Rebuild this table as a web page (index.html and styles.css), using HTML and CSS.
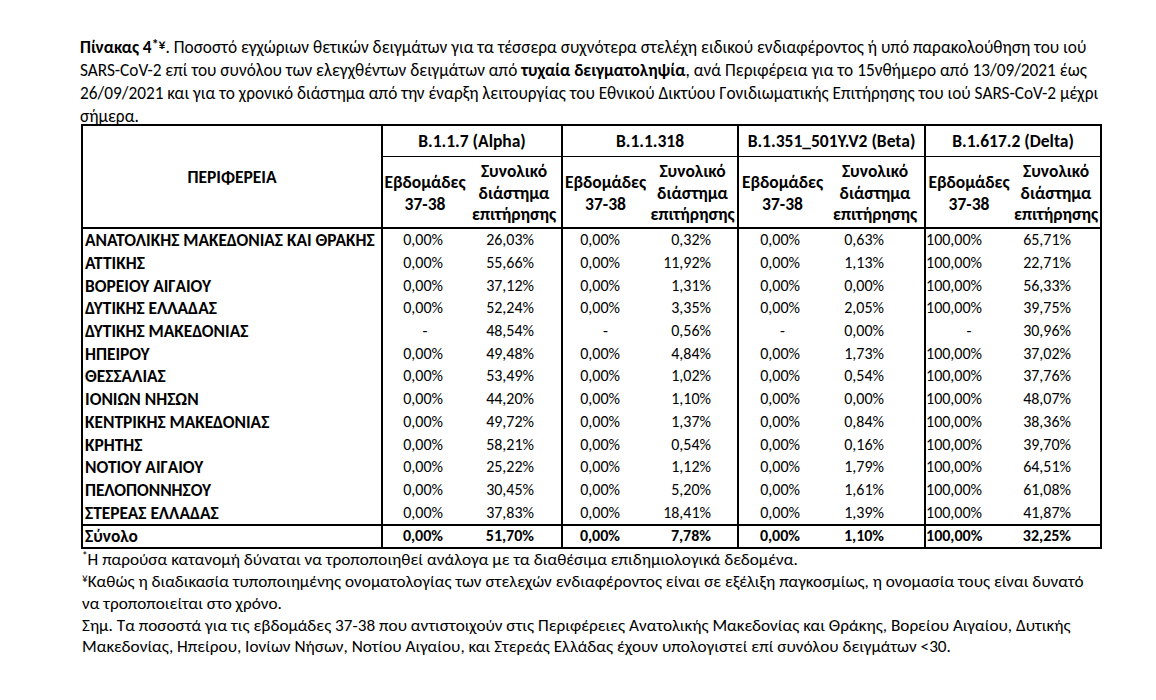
FILE: index.html
```html
<!DOCTYPE html>
<html lang="el">
<head>
<meta charset="utf-8">
<title>Πίνακας 4</title>
<link rel="stylesheet" href="styles.css">
</head>
<body>
<div class="page">
  <p class="title"><b>Πίνακας 4<sup class="tsup">*¥</sup></b>. Ποσοστό εγχώριων θετικών δειγμάτων για τα τέσσερα συχνότερα στελέχη ειδικού ενδιαφέροντος ή υπό παρακολούθηση του ιού<br>SARS-CoV-2 επί του συνόλου των ελεγχθέντων δειγμάτων από <b>τυχαία δειγματοληψία</b>, ανά Περιφέρεια για το 15νθήμερο από 13/09/2021 έως<br>26/09/2021 και για το χρονικό διάστημα από την έναρξη λειτουργίας του Εθνικού Δικτύου Γονιδιωματικής Επιτήρησης του ιού SARS-CoV-2 μέχρι<br>σήμερα.</p>

  <table class="data">
    <colgroup>
      <col class="w-reg">
      <col class="w-a1"><col class="w-a2">
      <col class="w-b1"><col class="w-b2">
      <col class="w-c1"><col class="w-c2">
      <col class="w-d1"><col class="w-d2">
    </colgroup>
    <thead>
      <tr class="h1">
        <th rowspan="2" class="reg-h">ΠΕΡΙΦΕΡΕΙΑ</th>
        <th colspan="2" class="grp">B.1.1.7 (Alpha)</th>
        <th colspan="2" class="grp">B.1.1.318</th>
        <th colspan="2" class="grp">B.1.351_501Y.V2 (Beta)</th>
        <th colspan="2" class="grp">B.1.617.2 (Delta)</th>
      </tr>
      <tr class="h2">
        <th class="sub gl">Εβδομάδες<br>37-38</th><th class="sub">Συνολικό<br>διάστημα<br>επιτήρησης</th>
        <th class="sub gl">Εβδομάδες<br>37-38</th><th class="sub">Συνολικό<br>διάστημα<br>επιτήρησης</th>
        <th class="sub gl">Εβδομάδες<br>37-38</th><th class="sub">Συνολικό<br>διάστημα<br>επιτήρησης</th>
        <th class="sub gl">Εβδομάδες<br>37-38</th><th class="sub">Συνολικό<br>διάστημα<br>επιτήρησης</th>
      </tr>
    </thead>
    <tbody>
      <tr><td class="reg">ΑΝΑΤΟΛΙΚΗΣ ΜΑΚΕΔΟΝΙΑΣ ΚΑΙ ΘΡΑΚΗΣ</td><td class="n a1 gl">0,00%</td><td class="n a2">26,03%</td><td class="n b1 gl">0,00%</td><td class="n b2">0,32%</td><td class="n c1 gl">0,00%</td><td class="n c2">0,63%</td><td class="n d1 gl">100,00%</td><td class="n d2">65,71%</td></tr>
      <tr><td class="reg">ΑΤΤΙΚΗΣ</td><td class="n a1 gl">0,00%</td><td class="n a2">55,66%</td><td class="n b1 gl">0,00%</td><td class="n b2">11,92%</td><td class="n c1 gl">0,00%</td><td class="n c2">1,13%</td><td class="n d1 gl">100,00%</td><td class="n d2">22,71%</td></tr>
      <tr><td class="reg">ΒΟΡΕΙΟΥ ΑΙΓΑΙΟΥ</td><td class="n a1 gl">0,00%</td><td class="n a2">37,12%</td><td class="n b1 gl">0,00%</td><td class="n b2">1,31%</td><td class="n c1 gl">0,00%</td><td class="n c2">0,00%</td><td class="n d1 gl">100,00%</td><td class="n d2">56,33%</td></tr>
      <tr><td class="reg">ΔΥΤΙΚΗΣ ΕΛΛΑΔΑΣ</td><td class="n a1 gl">0,00%</td><td class="n a2">52,24%</td><td class="n b1 gl">0,00%</td><td class="n b2">3,35%</td><td class="n c1 gl">0,00%</td><td class="n c2">2,05%</td><td class="n d1 gl">100,00%</td><td class="n d2">39,75%</td></tr>
      <tr><td class="reg">ΔΥΤΙΚΗΣ ΜΑΚΕΔΟΝΙΑΣ</td><td class="dash gl">-</td><td class="n a2">48,54%</td><td class="dash gl">-</td><td class="n b2">0,56%</td><td class="dash gl">-</td><td class="n c2">0,00%</td><td class="dash gl">-</td><td class="n d2">30,96%</td></tr>
      <tr><td class="reg">ΗΠΕΙΡΟΥ</td><td class="n a1 gl">0,00%</td><td class="n a2">49,48%</td><td class="n b1 gl">0,00%</td><td class="n b2">4,84%</td><td class="n c1 gl">0,00%</td><td class="n c2">1,73%</td><td class="n d1 gl">100,00%</td><td class="n d2">37,02%</td></tr>
      <tr><td class="reg">ΘΕΣΣΑΛΙΑΣ</td><td class="n a1 gl">0,00%</td><td class="n a2">53,49%</td><td class="n b1 gl">0,00%</td><td class="n b2">1,02%</td><td class="n c1 gl">0,00%</td><td class="n c2">0,54%</td><td class="n d1 gl">100,00%</td><td class="n d2">37,76%</td></tr>
      <tr><td class="reg">ΙΟΝΙΩΝ ΝΗΣΩΝ</td><td class="n a1 gl">0,00%</td><td class="n a2">44,20%</td><td class="n b1 gl">0,00%</td><td class="n b2">1,10%</td><td class="n c1 gl">0,00%</td><td class="n c2">0,00%</td><td class="n d1 gl">100,00%</td><td class="n d2">48,07%</td></tr>
      <tr><td class="reg">ΚΕΝΤΡΙΚΗΣ ΜΑΚΕΔΟΝΙΑΣ</td><td class="n a1 gl">0,00%</td><td class="n a2">49,72%</td><td class="n b1 gl">0,00%</td><td class="n b2">1,37%</td><td class="n c1 gl">0,00%</td><td class="n c2">0,84%</td><td class="n d1 gl">100,00%</td><td class="n d2">38,36%</td></tr>
      <tr><td class="reg">ΚΡΗΤΗΣ</td><td class="n a1 gl">0,00%</td><td class="n a2">58,21%</td><td class="n b1 gl">0,00%</td><td class="n b2">0,54%</td><td class="n c1 gl">0,00%</td><td class="n c2">0,16%</td><td class="n d1 gl">100,00%</td><td class="n d2">39,70%</td></tr>
      <tr><td class="reg">ΝΟΤΙΟΥ ΑΙΓΑΙΟΥ</td><td class="n a1 gl">0,00%</td><td class="n a2">25,22%</td><td class="n b1 gl">0,00%</td><td class="n b2">1,12%</td><td class="n c1 gl">0,00%</td><td class="n c2">1,79%</td><td class="n d1 gl">100,00%</td><td class="n d2">64,51%</td></tr>
      <tr><td class="reg">ΠΕΛΟΠΟΝΝΗΣΟΥ</td><td class="n a1 gl">0,00%</td><td class="n a2">30,45%</td><td class="n b1 gl">0,00%</td><td class="n b2">5,20%</td><td class="n c1 gl">0,00%</td><td class="n c2">1,61%</td><td class="n d1 gl">100,00%</td><td class="n d2">61,08%</td></tr>
      <tr><td class="reg">ΣΤΕΡΕΑΣ ΕΛΛΑΔΑΣ</td><td class="n a1 gl">0,00%</td><td class="n a2">37,83%</td><td class="n b1 gl">0,00%</td><td class="n b2">18,41%</td><td class="n c1 gl">0,00%</td><td class="n c2">1,39%</td><td class="n d1 gl">100,00%</td><td class="n d2">41,87%</td></tr>
    </tbody>
    <tfoot>
      <tr class="total"><td class="reg">Σύνολο</td><td class="n a1 gl">0,00%</td><td class="n a2">51,70%</td><td class="n b1 gl">0,00%</td><td class="n b2">7,78%</td><td class="n c1 gl">0,00%</td><td class="n c2">1,10%</td><td class="n d1 gl">100,00%</td><td class="n d2">32,25%</td></tr>
    </tfoot>
  </table>

  <div class="notes">
    <p><sup>*</sup>Η παρούσα κατανομή δύναται να τροποποιηθεί ανάλογα με τα διαθέσιμα επιδημιολογικά δεδομένα.</p>
    <p><sup>¥</sup>Καθώς η διαδικασία τυποποιημένης ονοματολογίας των στελεχών ενδιαφέροντος είναι σε εξέλιξη παγκοσμίως, η ονομασία τους είναι δυνατό<br>να τροποποιείται στο χρόνο.</p>
    <p>Σημ. Τα ποσοστά για τις εβδομάδες 37-38 που αντιστοιχούν στις Περιφέρειες Ανατολικής Μακεδονίας και Θράκης, Βορείου Αιγαίου, Δυτικής<br>Μακεδονίας, Ηπείρου, Ιονίων Νήσων, Νοτίου Αιγαίου, και Στερεάς Ελλάδας έχουν υπολογιστεί επί συνόλου δειγμάτων &lt;30.</p>
  </div>
</div>
</body>
</html>
```

FILE: styles.css
```css
html, body {
  margin: 0;
  padding: 0;
  background: #ffffff;
}

body {
  font-family: Carlito, "Open Sans", "Noto Sans", sans-serif;
  color: #000000;
  font-size: 17.2px;
}

.page {
  padding: 36px 0 0 80px;
}

.title {
  margin: 0 0 -4px 0;
  font-size: 17.3px;
  line-height: 23px;
  white-space: nowrap;
}

sup {
  font-size: 0.65em;
  line-height: 0;
  vertical-align: 0.45em;
}

.tsup {
  font-size: 0.8em;
  vertical-align: 0.3em;
}

.data {
  margin-left: 1px;
  border-collapse: collapse;
  table-layout: fixed;
  width: 1021px;
  border: 2px solid #000;
}

.w-reg { width: 300px; }
.w-a1 { width: 85px; }
.w-a2 { width: 95px; }
.w-b1 { width: 86px; }
.w-b2 { width: 90px; }
.w-c1 { width: 88px; }
.w-c2 { width: 99px; }
.w-d1 { width: 87px; }
.w-d2 { width: 89px; }

th, td {
  padding: 0;
  white-space: nowrap;
}

th {
  font-weight: bold;
  font-size: 17.5px;
  text-align: center;
}

.h1 th {
  height: 30px;
  line-height: 20px;
  border-bottom: 1.5px solid #000;
}

.h1 .reg-h {
  border-bottom: 2px solid #000;
  border-right: 2px solid #000;
}

.grp {
  border-left: 2px solid #000;
}

.h2 th {
  height: 67px;
  line-height: 21.5px;
  padding-top: 3px;
  border-bottom: 2px solid #000;
}

.gl {
  border-left: 2px solid #000;
}

td {
  height: 22.7px;
  line-height: 20px;
}

.reg {
  font-weight: bold;
  font-size: 17.4px;
  text-align: left;
  padding-left: 2px;
  border-right: 2px solid #000;
}

.n, .dash {
  font-size: 16px;
}

.n {
  text-align: right;
}

.a1 { padding-right: 24px; }
.a2 { padding-right: 27px; }
.b1 { padding-right: 28px; }
.b2 { padding-right: 26px; }
.c1 { padding-right: 26px; }
.c2 { padding-right: 40px; }
.d1 { padding-right: 36px; }
.d2 { padding-right: 29px; }

.dash {
  text-align: center;
}

.total td {
  font-weight: bold;
  border-top: 2px solid #000;
  height: 21px;
}

.notes {
  margin-left: 2px;
}

.notes p {
  margin: 0;
  line-height: 22px;
  white-space: nowrap;
}

.notes p:last-child {
  line-height: 21px;
}
```
